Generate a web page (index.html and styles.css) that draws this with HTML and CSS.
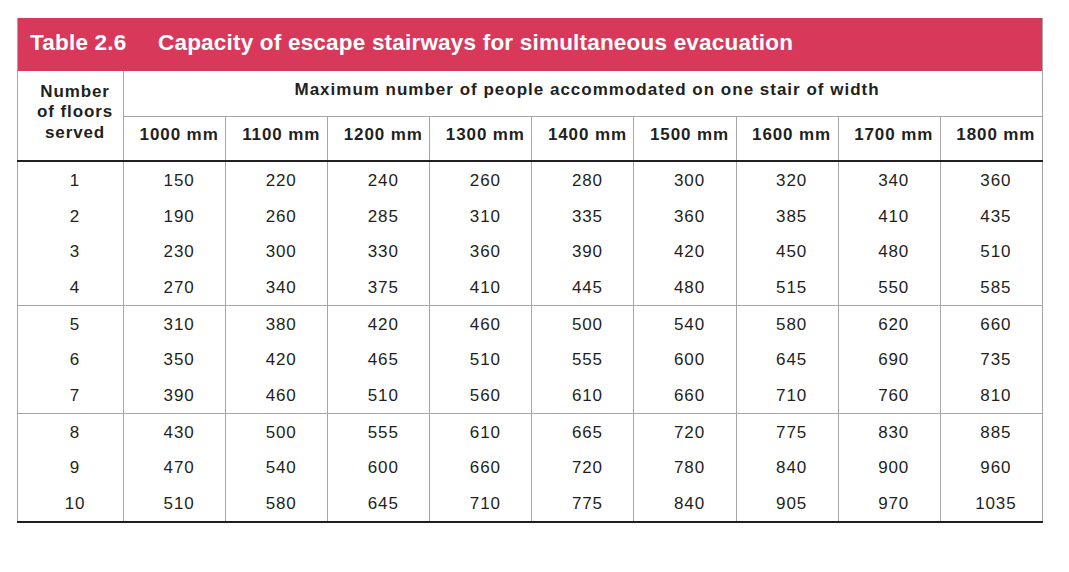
FILE: index.html
```html
<!DOCTYPE html>
<html lang="en">
<head>
<meta charset="utf-8">
<title>Table 2.6</title>
<link rel="stylesheet" href="styles.css">
</head>
<body>
<div class="sheet">
  <div class="title-bar">
    <span class="title-num">Table 2.6</span>
    <span class="title-text">Capacity of escape stairways for simultaneous evacuation</span>
  </div>
  <table class="cap">
    <colgroup>
      <col class="c-floor">
      <col class="c-w"><col class="c-w"><col class="c-w"><col class="c-w"><col class="c-w"><col class="c-w"><col class="c-w"><col class="c-w"><col class="c-w">
    </colgroup>
    <thead>
      <tr class="h1">
        <th rowspan="2" class="floors">Number<br>of floors<br>served</th>
        <th colspan="9" class="maxh">Maximum number of people accommodated on one stair of width</th>
      </tr>
      <tr class="h2">
        <th>1000 mm</th><th>1100 mm</th><th>1200 mm</th><th>1300 mm</th><th>1400 mm</th><th>1500 mm</th><th>1600 mm</th><th>1700 mm</th><th>1800 mm</th>
      </tr>
    </thead>
    <tbody>
      <tr><td>1</td><td>150</td><td>220</td><td>240</td><td>260</td><td>280</td><td>300</td><td>320</td><td>340</td><td>360</td></tr>
      <tr><td>2</td><td>190</td><td>260</td><td>285</td><td>310</td><td>335</td><td>360</td><td>385</td><td>410</td><td>435</td></tr>
      <tr><td>3</td><td>230</td><td>300</td><td>330</td><td>360</td><td>390</td><td>420</td><td>450</td><td>480</td><td>510</td></tr>
      <tr><td>4</td><td>270</td><td>340</td><td>375</td><td>410</td><td>445</td><td>480</td><td>515</td><td>550</td><td>585</td></tr>
    </tbody>
    <tbody>
      <tr><td>5</td><td>310</td><td>380</td><td>420</td><td>460</td><td>500</td><td>540</td><td>580</td><td>620</td><td>660</td></tr>
      <tr><td>6</td><td>350</td><td>420</td><td>465</td><td>510</td><td>555</td><td>600</td><td>645</td><td>690</td><td>735</td></tr>
      <tr><td>7</td><td>390</td><td>460</td><td>510</td><td>560</td><td>610</td><td>660</td><td>710</td><td>760</td><td>810</td></tr>
    </tbody>
    <tbody class="last">
      <tr><td>8</td><td>430</td><td>500</td><td>555</td><td>610</td><td>665</td><td>720</td><td>775</td><td>830</td><td>885</td></tr>
      <tr><td>9</td><td>470</td><td>540</td><td>600</td><td>660</td><td>720</td><td>780</td><td>840</td><td>900</td><td>960</td></tr>
      <tr><td>10</td><td>510</td><td>580</td><td>645</td><td>710</td><td>775</td><td>840</td><td>905</td><td>970</td><td>1035</td></tr>
    </tbody>
  </table>
</div>
</body>
</html>
```

FILE: styles.css
```css
html, body {
  margin: 0;
  padding: 0;
  background: #ffffff;
}

body {
  font-family: "Liberation Sans", Arial, Helvetica, sans-serif;
  color: #231f20;
}

.sheet {
  margin: 18px 0 0 17px;
  width: 1026px;
}

.title-bar {
  height: 53px;
  background: #d8395a;
  color: #ffffff;
  display: flex;
  align-items: center;
  padding-left: 12px;
  padding-bottom: 4px;
  border-left: 1px solid #a6a6a6;
  border-right: 1px solid #a6a6a6;
  box-sizing: border-box;
  font-size: 22.5px;
  font-weight: bold;
  letter-spacing: 0.2px;
}

.title-num {
  width: 128px;
}

.cap {
  border-collapse: collapse;
  width: 1026px;
  table-layout: fixed;
  font-size: 17px;
  letter-spacing: 0.9px;
}

.c-floor { width: 106px; }
.c-w { width: 102px; }

.cap th, .cap td {
  border-left: 1px solid #a6a6a6;
  border-right: 1px solid #a6a6a6;
  text-align: center;
  padding: 0 0 0 9px;
}

.cap th {
  font-weight: bold;
}

.h1 th {
  border-bottom: 1px solid #a6a6a6;
}

.h1 .floors {
  line-height: 20.5px;
  padding-top: 0;
  padding-bottom: 6px;
  border-bottom: 2px solid #231f20;
  vertical-align: middle;
}

.h1 .maxh {
  height: 38px;
  padding-bottom: 7px;
  padding-left: 8px;
  letter-spacing: 1px;
}

.h2 th {
  height: 35px;
  padding-bottom: 8px;
  border-bottom: 2px solid #231f20;
}

.cap td {
  height: 33.7px;
  padding-top: 2px;
  padding-bottom: 0;
}

.cap tbody {
  border-bottom: 1px solid #a6a6a6;
}

.cap tbody.last {
  border-bottom: 2px solid #231f20;
}
```
